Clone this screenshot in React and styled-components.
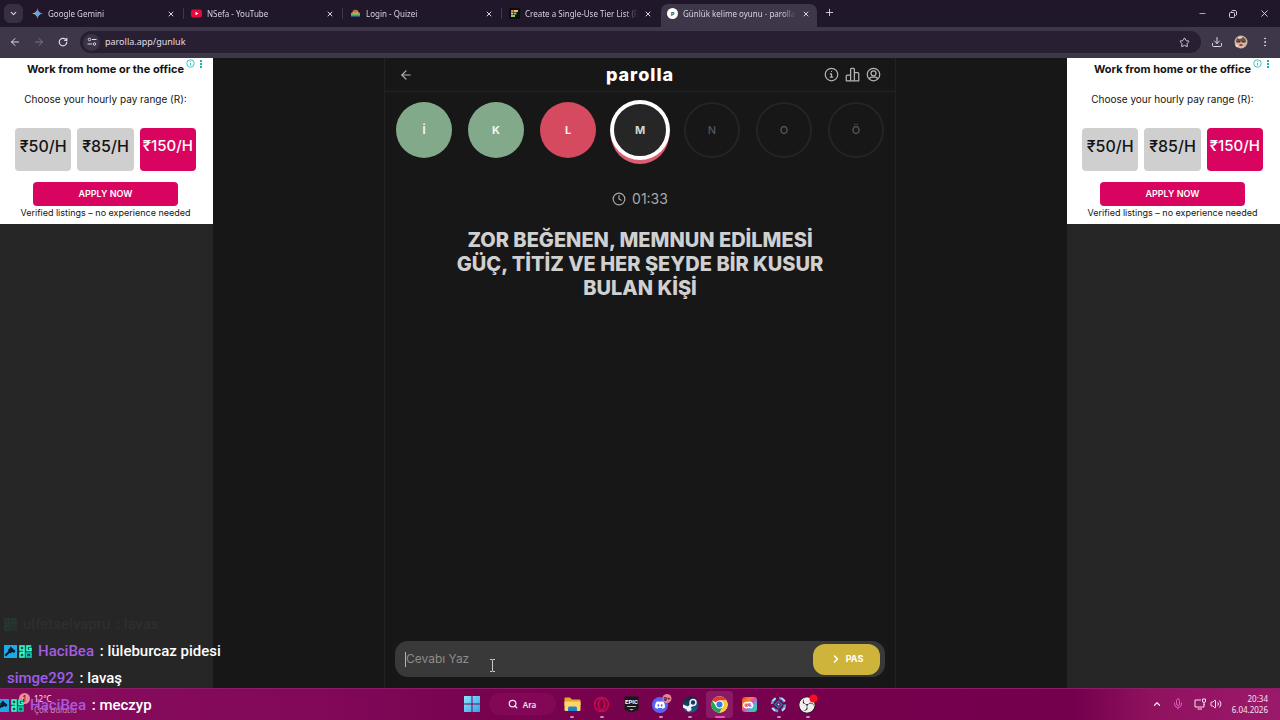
import React, { useState, Fragment } from "react";
import styled, { createGlobalStyle, css } from "styled-components";
import { SiObsstudio } from "react-icons/si";
import { FaDiscord, FaSteam } from "react-icons/fa";
import {
  ArrowLeft,
  ArrowRight,
  ChevronDown,
  ChevronRight,
  ChevronUp,
  Clock,
  Download,
  EllipsisVertical,
  Mic,
  Minus,
  Plus,
  RotateCw,
  Search,
  Star,
  Volume2,
  X,
} from "lucide-react";

const GlobalStyle = createGlobalStyle`
  *, *::before, *::after {
    box-sizing: border-box;
  }

  body {
    margin: 0;
    background: #171717;
    font-family: "Noto Sans", "Open Sans", sans-serif;
  }

  button, input {
    font-family: inherit;
    border: 0;
    padding: 0;
    margin: 0;
    background: none;
    color: inherit;
  }

  svg {
    display: block;
    flex: none;
  }
`;

const Screen = styled.div`
  position: relative;
  display: flex;
  flex-direction: column;
  height: 100vh;
  min-height: 480px;
  overflow: hidden;
`;

/* browser */

const TabStrip = styled.div`
  display: flex;
  align-items: stretch;
  height: 27px;
  padding-left: 4px;
  background: #20172b;
  color: #d8d3de;
`;

const TabMenu = styled.button`
  display: flex;
  align-items: center;
  justify-content: center;
  align-self: center;
  width: 19px;
  height: 19px;
  margin-right: 2px;
  border-radius: 6px;
  background: #392f43;
`;

const Tab = styled.div`
  position: relative;
  display: flex;
  align-items: center;
  flex: 0 1 159px;
  gap: 5px;
  min-width: 0;
  padding: 0 9px 0 7px;
  font-size: 8px;
  line-height: 12px;

  ${(p) =>
    p.$active
      ? css`
          flex-basis: 156px;
          padding: 0 7px 4px 6px;
          margin-top: 4px;
          border-radius: 7px 7px 0 0;
          background: #3e3649;
        `
      : css`
          &::after {
            content: "";
            position: absolute;
            right: 0;
            top: 8px;
            width: 1px;
            height: 11px;
            background: ${p.$last ? "transparent" : "#40374b"};
          }
        `}
`;

const TabTitle = styled.span`
  flex: 1;
  min-width: 0;
  overflow: hidden;
  white-space: nowrap;
  mask-image: linear-gradient(90deg, #000 88%, transparent);
`;

const IconButton = styled.button`
  display: flex;
  align-items: center;
  justify-content: center;
  width: ${(p) => p.$size || 12}px;
  height: ${(p) => p.$size || 12}px;
  color: ${(p) => p.$color || "inherit"};
`;

const WindowButtons = styled.div`
  display: flex;
  align-items: center;
  gap: 19px;
  margin-left: auto;
  padding-right: 10px;
`;

const Toolbar = styled.div`
  display: flex;
  align-items: center;
  height: 31px;
  padding: 0 9px 1px 8px;
  background: #3e3649;
  color: #ddd8e3;
`;

const NavButtons = styled.div`
  display: flex;
  gap: 10px;
  margin-right: 10px;
`;

const AddressBar = styled.div`
  display: flex;
  flex: 1;
  align-items: center;
  gap: 5px;
  height: 22px;
  margin-right: 10px;
  padding: 0 11px 0 3px;
  border-radius: 11px;
  background: #281f33;
`;

const SiteInfo = styled.button`
  display: flex;
  align-items: center;
  justify-content: center;
  width: 17px;
  height: 17px;
  border-radius: 50%;
  background: #3c3347;
`;

const AddressInput = styled.input`
  flex: 1;
  min-width: 0;
  outline: none;
  font-size: 9px;
  line-height: 14px;
  color: #e3dfe8;
`;

const ToolbarActions = styled.div`
  display: flex;
  align-items: center;
  gap: 12px;
`;

/* page */

const Page = styled.div`
  display: grid;
  grid-template-columns: 213px 1fr 213px;
  flex: 1;
  min-height: 0;
  background: #171717;
`;

const Rail = styled.aside`
  background: #262626;
  font-family: Inter, "Liberation Sans", sans-serif;
  color: #141414;
`;

const AdCard = styled.div`
  position: relative;
  display: flex;
  flex-direction: column;
  align-items: center;
  padding: 3px 2px 4px 0;
  background: #fff;
  text-align: center;
`;

const AdTitle = styled.div`
  font-size: 11px;
  font-weight: 700;
  line-height: 16px;
`;

const AdText = styled.div`
  font-size: ${(p) => (p.$small ? 9 : 10)}px;
  line-height: 14px;
  margin-top: ${(p) => (p.$small ? 0 : 15)}px;
`;

const AdMarks = styled.div`
  position: absolute;
  top: 1px;
  right: 10px;
  display: flex;
  gap: 5px;
  color: #18b4b8;
`;

const Prices = styled.div`
  display: grid;
  grid-template-columns: repeat(3, 1fr);
  gap: 6px;
  width: 100%;
  margin: 22px 0 11px;
  padding: 0 15px;
`;

const Price = styled.button`
  height: 43px;
  padding-bottom: 7px;
  border-radius: 4px;
  background: ${(p) => (p.$picked ? "#d9045f" : "#cfcfcf")};
  color: ${(p) => (p.$picked ? "#fff" : "#141414")};
  font-size: ${(p) => (p.$picked ? 15 : 16)}px;
  font-weight: 500;
  line-height: 20px;
  white-space: nowrap;
`;

const ApplyButton = styled.button`
  width: 145px;
  height: 24px;
  border-radius: 4px;
  background: #d9045f;
  color: #fff;
  font-size: 9px;
  font-weight: 600;
  line-height: 14px;
`;

const Game = styled.main`
  display: flex;
  flex-direction: column;
  justify-self: center;
  width: 100%;
  max-width: 512px;
  border: solid #222;
  border-width: 0 1px;
  font-family: Inter, "Liberation Sans", sans-serif;
  color: #d0d0d0;
`;

const GameHeader = styled.header`
  display: grid;
  grid-template-columns: 1fr auto 1fr;
  align-items: center;
  height: 34px;
  padding: 0 14px;
  border-bottom: 1px solid #242424;
`;

const Logo = styled.h1`
  margin: 0;
  color: #fff;
  font-size: 18px;
  font-weight: 800;
  line-height: 20px;
  letter-spacing: 1px;
`;

const HeaderActions = styled.div`
  display: flex;
  justify-content: flex-end;
  gap: 6px;
  color: #b4b4b4;
`;

const Letters = styled.div`
  display: flex;
  justify-content: space-between;
  padding: 10px 11px 0;
`;

const letterStates = {
  correct: css`
    background: #82aa8a;
    color: #f2f6f2;
  `,
  wrong: css`
    background: #d64a60;
    color: #fbecee;
  `,
  current: css`
    background: #262626;
    color: #d6d6d6;
    box-shadow: 0 0 0 2px #fff, 0 5px 0 1px #dc5d72;
    border: 2px solid #fff;
  `,
  waiting: css`
    border: 2px solid #242424;
    color: #565656;
    font-weight: 500;
  `,
};

const Letter = styled.div`
  display: flex;
  align-items: center;
  justify-content: center;
  width: 56px;
  height: 56px;
  border-radius: 50%;
  font-size: 11px;
  font-weight: 700;
  line-height: 14px;
  ${(p) => letterStates[p.$state]}
`;

const Timer = styled.div`
  display: flex;
  align-items: center;
  justify-content: center;
  gap: 6px;
  margin-top: 31px;
  font-size: 14px;
  line-height: 20px;
  color: #a9a9a9;
`;

const Question = styled.p`
  margin: 19px 56px 0;
  font-size: 20px;
  font-weight: 800;
  line-height: 24px;
  text-align: center;
`;

const AnswerForm = styled.form`
  position: relative;
  display: flex;
  align-items: center;
  height: 36px;
  margin: auto 10px 11px;
  padding: 0 5px 0 10px;
  border-radius: 13px;
  background: #393939;
`;

const Caret = styled.span`
  width: 1px;
  height: 15px;
  background: #b5b5b5;
`;

const AnswerInput = styled.input`
  flex: 1;
  min-width: 0;
  outline: none;
  font-size: 12px;
  line-height: 18px;

  &::placeholder {
    color: #8c8c8c;
    opacity: 1;
  }
`;

const PassButton = styled.button`
  display: flex;
  align-items: center;
  justify-content: center;
  gap: 4px;
  width: 67px;
  height: 31px;
  border-radius: 12px;
  background: #cfb43c;
  color: #fff;
  font-size: 9px;
  font-weight: 700;
  line-height: 14px;
`;

const MousePointer = styled.svg`
  position: absolute;
  left: 94px;
  top: 18px;
`;

/* taskbar */

const TaskbarRoot = styled.footer`
  display: grid;
  grid-template-columns: 1fr auto 1fr;
  align-items: center;
  height: 32px;
  padding-bottom: 1px;
  border-top: 1px solid #8c1c66;
  background: linear-gradient(
    90deg,
    #870c5d 0%,
    #82085a 25%,
    #77034f 38%,
    #74004d 84%,
    #90125f 90%,
    #9b196a 100%
  );
  color: #f3e3ee;
  font-size: 8px;
  line-height: 11px;
`;

const Weather = styled.div`
  display: flex;
  align-items: flex-start;
  gap: 4px;
  padding-left: 19px;
`;

const WeatherNote = styled.div`
  color: #c78bb0;
`;

const Badge = styled.span`
  display: flex;
  align-items: center;
  justify-content: center;
  width: 11px;
  height: 11px;
  border-radius: 50%;
  background: #f08a98;
  color: #43101f;
`;

const Apps = styled.div`
  display: flex;
  align-items: center;
  width: 363px;
`;

const SearchPill = styled.button`
  display: flex;
  align-items: center;
  justify-content: center;
  gap: 5px;
  width: 67px;
  height: 22px;
  margin: 0 3px;
  border-radius: 11px;
  background: #820857;
  font-size: 8px;
  font-weight: 600;
`;

const AppRow = styled.div`
  display: flex;
  flex: 1;
  justify-content: space-between;
`;

const AppButton = styled.button`
  position: relative;
  display: flex;
  align-items: center;
  justify-content: center;
  width: 27px;
  height: 27px;
  border-radius: 4px;
  background: ${(p) => (p.$active ? "#8a1a64" : "transparent")};

  &::after {
    content: "";
    position: absolute;
    bottom: 0;
    width: ${(p) => (p.$active ? 10 : 4)}px;
    height: 2px;
    border-radius: 1px;
    background: ${(p) => (p.$active ? "#f04fc0" : "#c98bb5")};
    display: ${(p) => (p.$running || p.$active ? "block" : "none")};
  }
`;

const Tray = styled.div`
  display: flex;
  align-items: center;
  justify-content: flex-end;
  padding-right: 12px;
`;

const TrayIcons = styled.div`
  display: flex;
  align-items: center;
  gap: 10px;
  margin-right: 10px;
`;

const TrayPair = styled.div`
  display: flex;
  align-items: center;
  gap: 4px;
`;

const Clockface = styled.div`
  text-align: right;
`;

/* stream chat drawn over everything */

const Chat = styled.ul`
  position: absolute;
  left: 0;
  bottom: 1px;
  margin: 0;
  padding: 0 0 0 4px;
  list-style: none;
  font-family: Roboto, sans-serif;
  font-size: 15px;
  font-weight: 500;
  line-height: 27px;
  color: #fff;
`;

const Message = styled.li`
  display: flex;
  align-items: center;
  gap: 2px;
  padding-left: ${(p) => (p.$badges ? 0 : 3)}px;
  margin-left: ${(p) => (p.$entering ? -8 : 0)}px;
  opacity: ${(p) => (p.$leaving ? 0.08 : 1)};
  color: ${(p) => (p.$leaving ? "#7c8f88" : "#fff")};
  white-space: pre;
`;

const Author = styled.span`
  margin-left: ${(p) => (p.$badges ? 4 : 0)}px;
  color: ${(p) => p.$color};
`;

const TABS = [
  { title: "Google Gemini", icon: "gemini" },
  { title: "NSefa - YouTube", icon: "youtube" },
  { title: "Login - Quizei", icon: "quizei" },
  { title: "Create a Single-Use Tier List (P", icon: "tiers" },
  { title: "Günlük kelime oyunu - parolla", icon: "parolla" },
];

const LETTERS = [
  ["İ", "correct"],
  ["K", "correct"],
  ["L", "wrong"],
  ["M", "current"],
  ["N", "waiting"],
  ["O", "waiting"],
  ["Ö", "waiting"],
];

const MESSAGES = [
  { author: "ulfetselvapru", text: "lavas", leaving: true, badges: 1, color: "#7c8f88" },
  { author: "HaciBea", text: "lüleburcaz pidesi", badges: 2, color: "#a55be0" },
  { author: "simge292", text: "lavaş", badges: 0, color: "#a35aea" },
  { author: "HaciBea", text: "meczyp", badges: 2, entering: true, color: "#a55be0" },
];

const Favicon = ({ name }) => {
  switch (name) {
    case "gemini":
      return (
        <svg width="11" height="11" viewBox="0 0 24 24">
          <path d="M12 0c1 6 3 9 6 10.500L12 12 6 10.500C9 9 11 6 12 0z" fill="#e8695c" />
          <path d="M24 12c-6 1-9 3-10.500 6L12 12l1.500-6C15 9 18 11 24 12z" fill="#5a8ff2" />
          <path d="M12 24c-1-6-3-9-6-10.500L12 12l6 1.500C15 15 13 18 12 24z" fill="#4db98a" />
          <path d="M0 12c6-1 9-3 10.500-6L12 12l-1.500 6C9 15 6 13 0 12z" fill="#e0b84a" />
          <circle cx="12" cy="12" r="5" fill="#62a3e6" />
        </svg>
      );
    case "youtube":
      return (
        <svg width="11" height="11" viewBox="0 0 22 22">
          <rect x="0" y="3" width="22" height="16" rx="4" fill="#e8093c" />
          <path d="M9 7.500v7l6-3.500z" fill="#fff" />
        </svg>
      );
    case "quizei":
      return (
        <svg width="11" height="11" viewBox="0 0 22 22">
          <path d="M4 13a7 9 0 0 1 14 0z" fill="#e3a04c" />
          <path d="M6 6l3-3 2 2 2-2 3 3-2 3H8z" fill="#c96a3e" />
          <path d="M2 9l5 3h8l5-3v5H2z" fill="#64b56d" />
          <path d="M2 14h18v3H2z" fill="#3f8fc0" />
        </svg>
      );
    case "tiers":
      return (
        <svg width="11" height="11" viewBox="0 0 22 22">
          <rect width="22" height="22" rx="2" fill="#0c0b0c" />
          <path d="M4 4h4v4H4z" fill="#e57a70" />
          <path d="M9 4h9v4H9z" fill="#d8c46e" />
          <path d="M4 9h4v4H4z" fill="#e6d16e" />
          <path d="M9 9h6v4H9z" fill="#8fc26a" />
          <path d="M4 14h8v4H4z" fill="#9fc66d" />
        </svg>
      );
    default:
      return (
        <svg width="11" height="11" viewBox="0 0 22 22">
          <circle cx="11" cy="11" r="11" fill="#fff" />
          <text x="11" y="15" fontSize="12" fontWeight="700" textAnchor="middle" fill="#444">
            P
          </text>
        </svg>
      );
  }
};

const SlidersIcon = () => (
  <svg width="10" height="10" viewBox="0 0 20 20" fill="none" stroke="#ddd8e3" strokeWidth="2">
    <circle cx="5" cy="5" r="2.500" />
    <path d="M10 5h9M1 14h9" />
    <circle cx="15" cy="14" r="2.500" />
  </svg>
);

const RestoreIcon = () => (
  <svg width="8" height="8" viewBox="0 0 16 16" fill="none" stroke="currentColor" strokeWidth="2">
    <rect x="1" y="5" width="10" height="10" rx="2" />
    <path d="M5 3c0-1 1-2 2-2h5c2 0 3 1 3 3v5c0 1-1 2-2 2" />
  </svg>
);

const AvatarIcon = () => (
  <svg width="14" height="14" viewBox="0 0 28 28">
    <circle cx="14" cy="14" r="13" fill="#c9b79c" />
    <path d="M4 14c0-7 4-10 10-10s10 3 10 10l-4 2H8z" fill="#6d5346" />
    <path d="M8 5l4-2 5 1-2 3-6 1z" fill="#e4d6bb" />
    <path d="M8 12h12v8a6 6 0 0 1-12 0z" fill="#e2b3a6" />
    <path d="M8 12h5v3H8zM15 12h5v3h-5z" fill="#3b2a34" />
    <path d="M11 18h6v4h-6z" fill="#9d3f50" />
    <path d="M3 19c2-1 4 0 5 4l-2 2a14 14 0 0 1-4-5z" fill="#efe6d6" />
  </svg>
);

const InfoIcon = () => (
  <svg width="15" height="15" viewBox="0 0 24 24" fill="none" stroke="currentColor" strokeWidth="2">
    <circle cx="12" cy="12" r="10" />
    <path d="M12 7h.01M10 11h2v5M10 16h4" strokeLinecap="round" strokeLinejoin="round" />
  </svg>
);

const PodiumIcon = () => (
  <svg width="15" height="15" viewBox="0 0 24 24" fill="none" stroke="currentColor" strokeWidth="2" strokeLinejoin="round">
    <path d="M9 22V3.500A1.500 1.500 0 0 1 10.500 2h3A1.500 1.500 0 0 1 15 3.500V22" />
    <path d="M9 13H3.500A1.500 1.500 0 0 0 2 14.500V22h20V10.500A1.500 1.500 0 0 0 20.500 9H15" />
  </svg>
);

const ProfileIcon = () => (
  <svg width="15" height="15" viewBox="0 0 24 24" fill="none" stroke="currentColor" strokeWidth="2">
    <circle cx="12" cy="12" r="10" />
    <circle cx="12" cy="10" r="4" />
    <path d="M5 19c1-2 2-3 4-3h6c2 0 3 1 4 3" />
  </svg>
);

const AdInfoIcon = () => (
  <svg width="9" height="9" viewBox="0 0 18 18" fill="none" stroke="currentColor" strokeWidth="1.600">
    <circle cx="9" cy="9" r="7.500" />
    <path d="M9 8v5M9 4.500v2" />
  </svg>
);

const AdDotsIcon = () => (
  <svg width="3" height="9" viewBox="0 0 3 9" fill="currentColor">
    <path d="M0 1h2v2H0zM0 4h2v2H0zM0 7h2v2H0z" />
  </svg>
);

const WindowsIcon = () => (
  <svg width="16" height="16" viewBox="0 0 16 16">
    <defs>
      <linearGradient id="win" x1="0" y1="0" x2="1" y2="1">
        <stop offset="0" stopColor="#8fe4fb" />
        <stop offset="1" stopColor="#31a5ea" />
      </linearGradient>
    </defs>
    <path d="M0 0h7.500v7.500H0zM8.500 0H16v7.500H8.500zM0 8.500h7.500V16H0zM8.500 8.500H16V16H8.500z" fill="url(#win)" />
  </svg>
);

const FolderIcon = () => (
  <svg width="17" height="15" viewBox="0 0 34 30">
    <path d="M1 3a2 2 0 0 1 2-2h9l4 4h15a2 2 0 0 1 2 2v10H1z" fill="#e6a531" />
    <path d="M1 9h32v17a2 2 0 0 1-2 2H3a2 2 0 0 1-2-2z" fill="#fbd668" />
    <path d="M8 28v-6a3 3 0 0 1 3-3h12a3 3 0 0 1 3 3v6z" fill="#2382c9" />
  </svg>
);

const OperaIcon = () => (
  <svg width="17" height="17" viewBox="0 0 34 34" fill="none" stroke="#cf0a48">
    <circle cx="17" cy="17" r="14" strokeWidth="3" />
    <ellipse cx="17" cy="17" rx="6" ry="11" strokeWidth="3" />
    <path d="M22 5c5 6 5 18 0 24" strokeWidth="2" stroke="#a00640" />
  </svg>
);

const EpicIcon = () => (
  <svg width="15" height="17" viewBox="0 0 30 34">
    <path d="M3 1h24a2 2 0 0 1 2 2v22c0 2-1 3-3 4l-11 4-11-4c-2-1-3-2-3-4V3a2 2 0 0 1 2-2z" fill="#17181b" />
    <text x="15" y="16" fontSize="12" fontWeight="700" textAnchor="middle" fill="#fff" fontFamily="Roboto, sans-serif">
      EPIC
    </text>
    <path d="M6 20h18v2H6zM10 26h10l-5 3z" fill="#bdbdbd" />
  </svg>
);

const DiscordIcon = () => (
  <svg width="22" height="20" viewBox="0 0 44 40">
    <circle cx="20" cy="22" r="16" fill="#5865f2" />
    <FaDiscord x="9" y="11" size={22} color="#fff" />
    <circle cx="34" cy="9" r="9" fill="#e98197" />
    <text x="34" y="14" fontSize="12" fontWeight="700" textAnchor="middle" fill="#4d0a23">
      9+
    </text>
  </svg>
);

const SteamIcon = () => (
  <svg width="17" height="17" viewBox="0 0 34 34">
    <defs>
      <linearGradient id="steam" x1="0" y1="0" x2="0" y2="1">
        <stop offset="0" stopColor="#14223c" />
        <stop offset="1" stopColor="#1b6497" />
      </linearGradient>
    </defs>
    <circle cx="17" cy="17" r="16" fill="url(#steam)" />
    <circle cx="22" cy="13" r="6" fill="none" stroke="#eef4f8" strokeWidth="3" />
    <path d="M2 17l10 4a5 5 0 1 1-3 6L2 23z" fill="#eef4f8" />
    <path d="M12 21l5-6 5 5-8 5z" fill="#eef4f8" />
  </svg>
);

const ChromeIcon = () => (
  <svg width="17" height="17" viewBox="0 0 48 48">
    <circle cx="24" cy="24" r="23" fill="#fff" />
    <path d="M24 24L4 12.500A23 23 0 0 1 44 12.500H24z" fill="#e33b2e" />
    <path d="M4 12.500A23 23 0 0 0 24 47l10-17.300H14z" fill="#23a455" />
    <path d="M44 12.500A23 23 0 0 1 24 47l10-17.300a11 11 0 0 0 0-11.700L24 12.500z" fill="#fcc934" />
    <circle cx="24" cy="24" r="11" fill="#fff" />
    <circle cx="24" cy="24" r="8.500" fill="#3478e5" />
  </svg>
);

const CloudIcon = () => (
  <svg width="15" height="15" viewBox="0 0 30 30">
    <defs>
      <linearGradient id="cc" x1="0" y1="0" x2="1" y2="1">
        <stop offset="0" stopColor="#e8333a" />
        <stop offset="0.3" stopColor="#f08a2c" />
        <stop offset="0.5" stopColor="#e34aa8" />
        <stop offset="0.7" stopColor="#49b4e8" />
        <stop offset="1" stopColor="#3fcf5a" />
      </linearGradient>
    </defs>
    <rect width="30" height="30" rx="6" fill="url(#cc)" />
    <path d="M10 21a5 5 0 1 1 1-9 6 6 0 1 1 8 9z" fill="none" stroke="#fff" strokeWidth="3" />
    <path d="M11 17l4 4M15 14a4 4 0 0 1 5 4" fill="none" stroke="#fff" strokeWidth="2" />
  </svg>
);

const KnotIcon = () => (
  <svg width="17" height="17" viewBox="0 0 34 34" fill="none" strokeWidth="3">
    <circle cx="17" cy="17" r="13" stroke="#5f9fd0" strokeWidth="5" strokeDasharray="13 7.400" />
    <rect x="12" y="12" width="10" height="10" stroke="#2e6fa8" transform="rotate(45 17 17)" />
    <path d="M5 10l6-6M23 4l7 6M30 24l-6 6M10 30l-6-6" stroke="#c4e4f5" />
    <circle cx="17" cy="17" r="2" fill="#c4e4f5" />
  </svg>
);

const ObsIcon = () => (
  <svg width="22" height="20" viewBox="0 0 44 40">
    <circle cx="20" cy="22" r="16" fill="#f2eef0" />
    <SiObsstudio x="3" y="5" size={34} color="#141216" />
    <circle cx="33" cy="9" r="8" fill="#f50f1f" />
  </svg>
);

const NetworkIcon = () => (
  <svg width="12" height="12" viewBox="0 0 24 24" fill="none" stroke="currentColor" strokeWidth="2">
    <path d="M14 4H2v14h18v-6M7 22h9" />
    <path d="M17 2v4a3 3 0 0 0 6 0V2zM20 9v5" />
  </svg>
);

const HammerBadge = () => (
  <svg width="13" height="13" viewBox="0 0 26 26">
    <rect width="26" height="26" fill="#1cabe6" />
    <path d="M13 3l10 9-3 4-4-2-3 3-2-1-7 7-3-3 8-8-1-3 3-2z" fill="#101b2c" />
  </svg>
);

const GgBadge = ({ faded }) => (
  <svg width="13" height="13" viewBox="0 0 26 26" fill="none" strokeWidth="3">
    <rect width="26" height="26" fill={faded ? "#1f7a5c" : "#0a5550"} />
    <path d="M2 2h8v8H2zM10 10v5H2M2 16h8v8H2zM24 2h-8v9h8V7h-4" stroke="#3dffcc" />
    <path d="M15 24v-8h9v8z" stroke="#16cdb2" />
  </svg>
);

const Ad = ({ id }) => {
  const [picked, setPicked] = useState("₹150/H");

  return (
    <Rail aria-label={id}>
      <AdCard>
        <AdMarks>
          <AdInfoIcon />
          <AdDotsIcon />
        </AdMarks>
        <AdTitle>Work from home or the office</AdTitle>
        <AdText>Choose your hourly pay range (R):</AdText>
        <Prices>
          {["₹50/H", "₹85/H", "₹150/H"].map((price) => (
            <Price
              key={price}
              type="button"
              $picked={price === picked}
              onClick={() => setPicked(price)}
            >
              {price}
            </Price>
          ))}
        </Prices>
        <ApplyButton type="button">APPLY NOW</ApplyButton>
        <AdText $small>Verified listings – no experience needed</AdText>
      </AdCard>
    </Rail>
  );
};

const Browser = () => {
  const [url, setUrl] = useState("parolla.app/gunluk");

  return (
    <Fragment>
      <TabStrip>
        <TabMenu aria-label="Tabs">
          <ChevronDown size={9} strokeWidth={3} />
        </TabMenu>
        {TABS.map((tab, i) => (
          <Tab key={tab.icon} $active={i === 4} $last={i === 3}>
            <Favicon name={tab.icon} />
            <TabTitle>{tab.title}</TabTitle>
            <IconButton $size={9} aria-label="Close tab">
              <X size={8} strokeWidth={3} />
            </IconButton>
          </Tab>
        ))}
        <IconButton $size={25} aria-label="New tab">
          <Plus size={11} strokeWidth={2} />
        </IconButton>
        <WindowButtons>
          <IconButton aria-label="Minimize">
            <Minus size={9} />
          </IconButton>
          <IconButton aria-label="Restore">
            <RestoreIcon />
          </IconButton>
          <IconButton aria-label="Close">
            <X size={11} />
          </IconButton>
        </WindowButtons>
      </TabStrip>
      <Toolbar>
        <NavButtons>
          <IconButton $size={14} aria-label="Back">
            <ArrowLeft size={12} strokeWidth={2} />
          </IconButton>
          <IconButton $size={14} $color="#7a7285" aria-label="Forward">
            <ArrowRight size={12} strokeWidth={2} />
          </IconButton>
          <IconButton $size={14} aria-label="Reload">
            <RotateCw size={10} strokeWidth={3} />
          </IconButton>
        </NavButtons>
        <AddressBar>
          <SiteInfo aria-label="Site information">
            <SlidersIcon />
          </SiteInfo>
          <AddressInput
            aria-label="Address"
            value={url}
            onChange={(event) => setUrl(event.target.value)}
          />
          <IconButton aria-label="Bookmark">
            <Star size={11} />
          </IconButton>
        </AddressBar>
        <ToolbarActions>
          <IconButton aria-label="Downloads">
            <Download size={12} strokeWidth={2} />
          </IconButton>
          <IconButton aria-label="Profile">
            <AvatarIcon />
          </IconButton>
          <IconButton aria-label="Menu">
            <EllipsisVertical size={12} />
          </IconButton>
        </ToolbarActions>
      </Toolbar>
    </Fragment>
  );
};

const Parolla = () => {
  const [answer, setAnswer] = useState("");

  return (
    <Game>
      <GameHeader>
        <IconButton $size={14} $color="#b4b4b4" aria-label="Geri">
          <ArrowLeft size={14} strokeWidth={2} />
        </IconButton>
        <Logo>parolla</Logo>
        <HeaderActions>
          <IconButton $size={15} aria-label="Bilgi">
            <InfoIcon />
          </IconButton>
          <IconButton $size={15} aria-label="İstatistik">
            <PodiumIcon />
          </IconButton>
          <IconButton $size={15} aria-label="Profil">
            <ProfileIcon />
          </IconButton>
        </HeaderActions>
      </GameHeader>
      <Letters>
        {LETTERS.map(([letter, state]) => (
          <Letter key={letter} $state={state}>
            {letter}
          </Letter>
        ))}
      </Letters>
      <Timer>
        <Clock size={14} strokeWidth={2} />
        01:33
      </Timer>
      <Question>
        ZOR BEĞENEN, MEMNUN EDİLMESİ GÜÇ, TİTİZ VE HER ŞEYDE BİR KUSUR BULAN KİŞİ
      </Question>
      <AnswerForm onSubmit={(event) => event.preventDefault()}>
        <Caret />
        <AnswerInput
          aria-label="Cevap"
          placeholder="Cevabı Yaz"
          value={answer}
          onChange={(event) => setAnswer(event.target.value)}
        />
        <PassButton type="submit">
          <ChevronRight size={12} strokeWidth={3} />
          PAS
        </PassButton>
        <MousePointer width="7" height="13" viewBox="0 0 7 13" fill="none" stroke="#c9c9c9">
          <path d="M1 .5h2l.5.5.5-.5h2M3.500 1v11M1 12.500h2l.5-.5.5.5h2" />
        </MousePointer>
      </AnswerForm>
    </Game>
  );
};

const Taskbar = () => (
  <TaskbarRoot>
    <Weather>
      <Badge>1</Badge>
      <div>
        <div>12°C</div>
        <WeatherNote>Çok bulutlu</WeatherNote>
      </div>
    </Weather>
    <Apps>
      <AppButton aria-label="Başlat">
        <WindowsIcon />
      </AppButton>
      <SearchPill>
        <Search size={10} strokeWidth={3} />
        Ara
      </SearchPill>
      <AppRow>
        <AppButton $running aria-label="Dosya Gezgini">
          <FolderIcon />
        </AppButton>
        <AppButton $running aria-label="Opera">
          <OperaIcon />
        </AppButton>
        <AppButton aria-label="Epic Games">
          <EpicIcon />
        </AppButton>
        <AppButton $running aria-label="Discord">
          <DiscordIcon />
        </AppButton>
        <AppButton $running aria-label="Steam">
          <SteamIcon />
        </AppButton>
        <AppButton $active aria-label="Chrome">
          <ChromeIcon />
        </AppButton>
        <AppButton aria-label="Creative Cloud">
          <CloudIcon />
        </AppButton>
        <AppButton $running aria-label="Chat">
          <KnotIcon />
        </AppButton>
        <AppButton $running aria-label="OBS">
          <ObsIcon />
        </AppButton>
      </AppRow>
    </Apps>
    <Tray>
      <TrayIcons>
        <ChevronUp size={10} strokeWidth={3} />
        <Mic size={12} color="#e05bc0" />
        <TrayPair>
          <NetworkIcon />
          <Volume2 size={12} />
        </TrayPair>
      </TrayIcons>
      <Clockface>
        <div>20:34</div>
        <div>6.04.2026</div>
      </Clockface>
    </Tray>
  </TaskbarRoot>
);

const App = () => (
  <Fragment>
    <GlobalStyle />
    <Screen>
      <Browser />
      <Page>
        <Ad id="left" />
        <Parolla />
        <Ad id="right" />
      </Page>
      <Taskbar />
      <Chat>
        {MESSAGES.map((m, i) => (
          <Message key={i} $badges={m.badges} $leaving={m.leaving} $entering={m.entering}>
            {m.badges > 1 && <HammerBadge />}
            {m.badges > 0 && <GgBadge faded={m.leaving} />}
            <Author $badges={m.badges} $color={m.color}>
              {m.author}
            </Author>
            <span>{" : " + m.text}</span>
          </Message>
        ))}
      </Chat>
    </Screen>
  </Fragment>
);

export default App;
